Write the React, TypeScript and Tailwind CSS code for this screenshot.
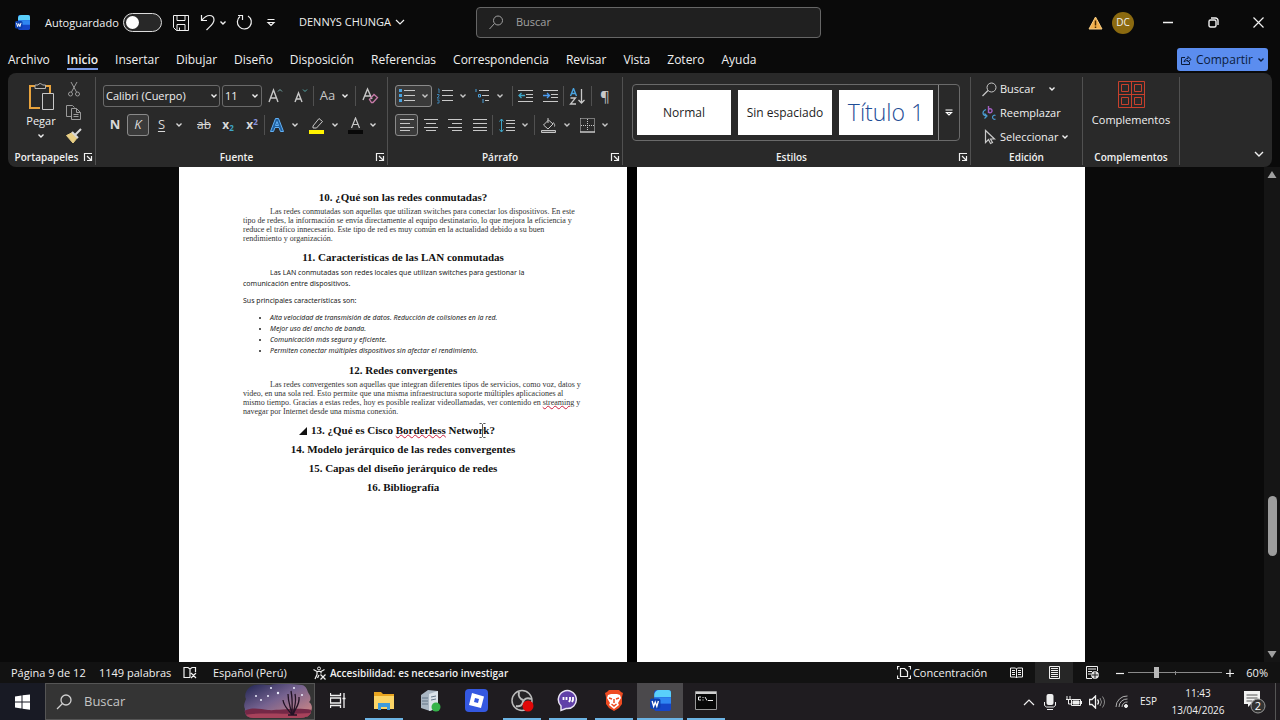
import type { ReactNode } from "react";

const tabs = [
  "Archivo",
  "Inicio",
  "Insertar",
  "Dibujar",
  "Diseño",
  "Disposición",
  "Referencias",
  "Correspondencia",
  "Revisar",
  "Vista",
  "Zotero",
  "Ayuda",
];

type IconProps = { w?: number; h?: number; className?: string; children: ReactNode };

function Icon({ w = 18, h = 18, className = "", children }: IconProps) {
  return (
    <svg
      width={w}
      height={h}
      viewBox={`0 0 ${w} ${h}`}
      fill="none"
      stroke="currentColor"
      aria-hidden="true"
      className={`shrink-0 ${className}`}
    >
      {children}
    </svg>
  );
}

function Chevron({ className = "" }: { className?: string }) {
  return (
    <Icon w={8} h={6} className={className}>
      <path d="M1.5 1.5 4 4l2.500-2.500" strokeWidth="1.400" />
    </Icon>
  );
}

function Launcher({ label }: { label: string }) {
  return (
    <button aria-label={label}>
      <Icon w={10} h={10}>
        <path d="M1.500 9V1.500H9M4 4l4 4M8.500 4v4.500H4" strokeWidth="1.200" />
      </Icon>
    </button>
  );
}

function Separator() {
  return <span className="h-5 w-px shrink-0 bg-[#505050]" />;
}

type ToolProps = { label: string; width: string; active?: boolean; children: ReactNode };

function Tool({ label, width, active, children }: ToolProps) {
  return (
    <button
      aria-label={label}
      className={`flex h-[22px] shrink-0 items-center justify-center gap-1.5 rounded-[3px] border ${
        active ? "border-[#8a8a8a] bg-[#3a3a3a]" : "border-transparent"
      } ${width}`}
    >
      {children}
    </button>
  );
}

type GroupProps = { title: string; width: string; launcher?: boolean; children: ReactNode };

function Group({ title, width, launcher, children }: GroupProps) {
  return (
    <section className={`mt-1 mb-0.5 flex shrink-0 flex-col border-r border-[#505050] ${width}`}>
      <div className="flex-1">{children}</div>
      <div className="flex h-4 items-center px-0.5">
        <h2 className="flex-1 text-center text-[10px] leading-4 font-semibold">{title}</h2>
        {launcher && <Launcher label={`Opciones de ${title}`} />}
      </div>
    </section>
  );
}

function WordLogo({ size }: { size: number }) {
  return (
    <svg width={size} height={size} viewBox="0 0 20 20" aria-hidden="true">
      <rect x="4" y="0" width="16" height="20" rx="2.500" fill="#1546c8" />
      <path d="M4 7h16V2.500A2.500 2.500 0 0 0 17.500 0h-9A4.500 4.500 0 0 0 4 4.500z" fill="#5ad0fb" />
      <path d="M4 7h16v6H4z" fill="#2f86f2" />
      <rect x="0" y="8" width="10" height="10" rx="2" fill="#0c3fae" />
      <path d="m2 10.500 1.500 5L5 11.500l1.500 4 1.500-5" fill="none" stroke="#fff" strokeWidth="1.300" />
    </svg>
  );
}

function TitleBar() {
  return (
    <header className="flex h-[45px] shrink-0 items-center">
      <div className="flex flex-[461_1_0px] items-center pl-[15px]">
        <WordLogo size={15} />
        <label htmlFor="autosave" className="ml-[15px] w-[78px] text-[11px] leading-4 font-medium">
          Autoguardado
        </label>
        <input
          id="autosave"
          type="checkbox"
          className="h-[19px] w-[39px] appearance-none rounded-full border border-[#dcdcdc] bg-[#282828] p-0.5 before:block before:size-[13px] before:rounded-full before:bg-white"
        />
        <button aria-label="Guardar" className="ml-[11px]">
          <Icon w={16} h={16}>
            <path d="M.5.5h15v15h-12l-3-3zM4 .500v5h8v-5M4 15.500v-6h8v6M6.500 15.500v-3" />
          </Icon>
        </button>
        <button aria-label="Deshacer" className="ml-[11px] flex items-center gap-1">
          <Icon w={15} h={17}>
            <path d="M1.500 1v5.500H7M1.500 6.500C4 3.500 6.500 1.500 9.500 1.500c3 0 4.500 2 4.500 4.500 0 4-4.500 6.500-7.500 10" strokeWidth="1.200" />
          </Icon>
          <Chevron />
        </button>
        <button aria-label="Rehacer" className="ml-[9px]">
          <Icon w={17} h={17}>
            <path d="M2 1.500h4.500V6M4 2.500a7 7 0 1 0 8-.500" strokeWidth="1.200" />
          </Icon>
        </button>
        <button aria-label="Personalizar barra" className="ml-[13px]">
          <Icon w={10} h={9}>
            <path d="M1.500 1.500h7M2 4.500h6L5 7.500z" strokeWidth="1.200" />
          </Icon>
        </button>
        <button className="ml-[23px] flex items-center gap-1 text-[11px] whitespace-nowrap">
          DENNYS CHUNGA
          <Icon w={10} h={7}>
            <path d="m1 1 4 4 4-4" strokeWidth="1.200" />
          </Icon>
        </button>
      </div>
      <label className="flex h-[31px] w-[345px] items-center gap-3 rounded border border-[#666] bg-[#202020] px-3 text-[#a0a0a0]">
        <Icon w={15} h={15}>
          <circle cx="9" cy="5.500" r="4.500" />
          <path d="M5.500 8.500.5 14" />
        </Icon>
        <input
          aria-label="Buscar en Word"
          placeholder="Buscar"
          className="w-full bg-transparent text-[11px] outline-none placeholder:text-[#a0a0a0]"
        />
      </label>
      <div className="flex flex-[443_1_0px] items-center justify-end pr-4">
        <button aria-label="Advertencia" className="mr-[9px]">
          <Icon w={15} h={14}>
            <path d="M7.500 1 14 13H1z" fill="#f3b04c" stroke="#f7cd85" />
            <path d="M7.500 4.500v5M7.500 10.500v1.500" stroke="#4a2a00" strokeWidth="1.500" />
          </Icon>
        </button>
        <button className="size-[22px] rounded-full bg-[#8b6a10] text-[10px]">DC</button>
        <button aria-label="Minimizar" className="ml-[29px]">
          <Icon w={10} h={10}>
            <path d="M0 4.500h10" strokeWidth="1.500" />
          </Icon>
        </button>
        <button aria-label="Restaurar" className="ml-[35px]">
          <Icon w={11} h={11}>
            <rect x="1" y="3" width="7" height="7" rx="1.500" strokeWidth="1.400" />
            <path d="M3 1h4.500A2.500 2.500 0 0 1 10 3.500V8" strokeWidth="1.400" />
          </Icon>
        </button>
        <button aria-label="Cerrar" className="ml-[34px]">
          <Icon w={11} h={11}>
            <path d="m.5.5 10 10M10.500.5l-10 10" strokeWidth="1.200" />
          </Icon>
        </button>
      </div>
    </header>
  );
}

function TabBar() {
  return (
    <nav className="flex h-7 shrink-0 items-start justify-between pr-3 pl-2">
      <div className="flex gap-[17px] pt-1.5">
        {tabs.map((tab) => (
          <a
            key={tab}
            href="#inicio"
            className={`border-b-2 text-xs leading-[17px] ${
              tab === "Inicio" ? "border-[#7b9be6] font-semibold" : "border-transparent"
            }`}
          >
            {tab}
          </a>
        ))}
      </div>
      <button className="mt-[3px] flex h-[23px] w-[91px] items-center justify-center gap-1 rounded-[3px] bg-[#5b8def] text-xs text-[#0b1c3c]">
        <Icon w={12} h={12}>
          <path d="M5 3.500H1.500v7h8V8M4 8c.5-2.500 2-3.500 4-3.500V2.500L11 5.500 8 8V6.500C6 6.500 5 7 4 8z" />
        </Icon>
        Compartir
        <Chevron />
      </button>
    </nav>
  );
}

function ClipboardGroup() {
  return (
    <Group title="Portapapeles" width="w-[88px]" launcher>
      <div className="flex gap-2 pt-1 pl-[17px]">
        <button className="flex w-8 flex-col items-center text-[11px] leading-4">
          <Icon w={28} h={32}>
            <path d="M8 5H3v22h10M18 5h5v8" stroke="#e8a33d" strokeWidth="2" />
            <path d="M8 7.500V4h3a2.500 2.500 0 0 1 4.500 0h3v3.500z" stroke="#b5b5b5" />
            <path d="M15.500 12.500h11v16h-11z" fill="#2b2b2b" stroke="#c8c8c8" />
          </Icon>
          Pegar
          <Chevron className="mt-1" />
        </button>
        <div className="flex flex-col gap-1.5 text-[#9a9a9a]">
          <button aria-label="Cortar">
            <Icon h={17}>
              <path d="m6 1 5.500 10M12 1 6.500 11" />
              <circle cx="5.500" cy="13" r="2" />
              <circle cx="12.500" cy="13" r="2" />
            </Icon>
          </button>
          <button aria-label="Copiar">
            <Icon h={17}>
              <path d="M6.500 12.500h-5v-11h6l2 2M6.500 4.500h5l4 4v7h-9zM11.500 4.500v4h4M8.500 10.500h5M8.500 12.500h5" />
            </Icon>
          </button>
          <button aria-label="Copiar formato">
            <Icon h={17}>
              <path d="m1.500 8.500 6-3 5 5-4.500 5.500z" fill="#e9cf85" stroke="#e9cf85" />
              <path d="m7 5 6 6M10 8l6-6" stroke="#d8d8d8" strokeWidth="2" />
            </Icon>
          </button>
        </div>
      </div>
    </Group>
  );
}

function FontGroup() {
  return (
    <Group title="Fuente" width="w-[292px]" launcher>
      <div className="flex items-center pt-2 pl-[7px]">
        <div className="flex h-[22px] w-[117px] items-center rounded-[3px] border border-[#6a6a6a] pr-px pl-0.5">
          <select aria-label="Fuente" className="w-full appearance-none bg-transparent text-[11px] outline-none">
            <option>Calibri (Cuerpo)</option>
          </select>
          <Chevron />
        </div>
        <div className="ml-0.5 flex h-[22px] w-10 items-center rounded-[3px] border border-[#6a6a6a] pr-0.5 pl-0.5">
          <select aria-label="Tamaño de fuente" className="w-full appearance-none bg-transparent text-[11px] outline-none">
            <option>11</option>
          </select>
          <Chevron />
        </div>
        <Tool label="Aumentar tamaño" width="w-[26px]">
          <Icon className="text-[#c8c8c8]">
            <path d="m3 15 4.500-12L12 15M4.500 11h6" strokeWidth="1.400" />
            <path d="m12 4.500 2-2 2 2" stroke="#7aa" />
          </Icon>
        </Tool>
        <Tool label="Disminuir tamaño" width="w-[25px]">
          <Icon className="text-[#c8c8c8]">
            <path d="m3 15 3.500-9L10 15M4.500 12h4" strokeWidth="1.400" />
            <path d="m11 2.500 2 2 2-2" stroke="#5aa" />
          </Icon>
        </Tool>
        <Separator />
        <Tool label="Cambiar mayúsculas" width="w-[41px]">
          <span className="text-[13px] text-[#c8c8c8]">Aa</span>
          <Chevron />
        </Tool>
        <Separator />
        <Tool label="Borrar formato" width="w-7">
          <Icon className="text-[#c8c8c8]">
            <path d="M2 13 6.500 2 11 12M3.500 9h6" strokeWidth="1.400" />
            <path d="m8.500 12.500 4.500-5 3.500 3-4.500 5h-1.500z" stroke="#c77aa8" strokeWidth="1.300" />
          </Icon>
        </Tool>
      </div>
      <div className="flex items-center pt-[7px] pl-[7px] text-[13px] text-[#d8d8d8]">
        <Tool label="Negrita" width="w-6">
          <b>N</b>
        </Tool>
        <Tool label="Cursiva" width="w-[22px]" active>
          <i>K</i>
        </Tool>
        <Tool label="Subrayado" width="w-[43px]">
          <span className="mr-1 underline underline-offset-2">S</span>
          <Chevron />
        </Tool>
        <Tool label="Tachado" width="w-6">
          <s className="text-xs">ab</s>
        </Tool>
        <Tool label="Subíndice" width="w-6">
          <span className="text-xs font-bold">
            x<sub className="text-[8px] text-[#3ea6c8]">2</sub>
          </span>
        </Tool>
        <Tool label="Superíndice" width="w-6">
          <span className="text-xs font-bold">
            x<sup className="text-[8px] text-[#8f97e0]">2</sup>
          </span>
        </Tool>
        <Separator />
        <Tool label="Efectos de texto" width="w-[38px]">
          <Icon w={16} h={16}>
            <path d="M1.500 14.500 6.500 1.500h3l5 13h-3l-1.500-4H6l-1.500 4zM6.500 8.500 8 4.500l1.500 4z" stroke="#62b1f5" fill="#1f5f9f" />
          </Icon>
          <Chevron />
        </Tool>
        <Tool label="Color de resaltado" width="w-[41px]">
          <Icon w={17} h={17}>
            <path d="m5 9 6-7.500 3.500 3L8.500 11H5z" stroke="#c8c8c8" />
            <path d="M1 13h15v4H1z" fill="#fff200" stroke="none" />
          </Icon>
          <Chevron />
        </Tool>
        <Tool label="Color de fuente" width="w-9">
          <Icon w={15} h={17}>
            <path d="M3.500 11 7.500 1l4 10M5 7.500h5" stroke="#c8c8c8" strokeWidth="1.200" />
            <path d="M0 13h15v4H0z" fill="#080808" stroke="none" />
          </Icon>
          <Chevron />
        </Tool>
      </div>
    </Group>
  );
}

function ParagraphGroup() {
  return (
    <Group title="Párrafo" width="w-[235px]" launcher>
      <div className="flex items-center pt-2 pl-[7px] text-[#c8c8c8]">
        <Tool label="Viñetas" width="w-[37px]" active>
          <Icon w={16} h={16}>
            <path d="M5 2.500h11M5 7.500h11M5 12.500h11" />
            <path d="M0 2.500h3M0 7.500h3M0 12.500h3" stroke="#4aa3df" strokeWidth="3" />
          </Icon>
          <Chevron />
        </Tool>
        <Tool label="Numeración" width="w-[39px]">
          <Icon w={16} h={16}>
            <path d="M5 2.500h11M5 7.500h11M5 12.500h11" />
            <path d="M1 1h1v4M0 6.500h2V8L0 10h2.500M0 12h2v3H0" stroke="#3d83b3" />
          </Icon>
          <Chevron />
        </Tool>
        <Tool label="Lista multinivel" width="w-9">
          <Icon w={15} h={16}>
            <path d="M4 2.500h10M7 7.500h7M10 12.500h4" />
            <path d="M1 1v3M3.500 6.500h2V9h-2zM8 11v4" stroke="#4aa3df" />
          </Icon>
          <Chevron />
        </Tool>
        <span className="w-[5px]" />
        <Separator />
        <Tool label="Disminuir sangría" width="w-[25px]">
          <Icon w={15} h={14}>
            <path d="M0 1.500h15M8 5.500h7M8 8.500h7M0 12.500h15" />
            <path d="M7 6.500H1M3.500 4 1 6.500 3.500 9" stroke="#3ea6c8" strokeWidth="1.300" />
          </Icon>
        </Tool>
        <Tool label="Aumentar sangría" width="w-[25px]">
          <Icon w={15} h={14}>
            <path d="M0 1.500h15M8 5.500h7M8 8.500h7M0 12.500h15" />
            <path d="M0 6.500h6M4 4l2.500 2.500L4 9" stroke="#4a9bf0" strokeWidth="1.300" />
          </Icon>
        </Tool>
        <Separator />
        <Tool label="Ordenar" width="w-[27px]">
          <Icon w={17} h={17}>
            <path d="M1.500 8 4.500.500 7.500 8M2.500 5.500h4" stroke="#4aa3df" strokeWidth="1.400" />
            <path d="M1.500 10h5l-5 6h5.500M12.500 1v14M9.500 12l3 3 3-3" strokeWidth="1.300" />
          </Icon>
        </Tool>
        <Separator />
        <Tool label="Mostrar todo" width="w-[26px]">
          <span className="text-[15px]">¶</span>
        </Tool>
      </div>
      <div className="flex items-center pt-[7px] pl-[7px] text-[#c8c8c8]">
        <Tool label="Alinear a la izquierda" width="w-[23px]" active>
          <Icon w={14} h={14}>
            <path d="M0 1.500h14M0 5.500h10M0 9.500h14M0 12.500h10" />
          </Icon>
        </Tool>
        <Tool label="Centrar" width="w-[25px]">
          <Icon w={14} h={14}>
            <path d="M0 1.500h14M2 5.500h10M0 9.500h14M2 12.500h10" />
          </Icon>
        </Tool>
        <Tool label="Alinear a la derecha" width="w-6">
          <Icon w={14} h={14}>
            <path d="M0 1.500h14M4 5.500h10M0 9.500h14M4 12.500h10" />
          </Icon>
        </Tool>
        <Tool label="Justificar" width="w-[25px]">
          <Icon w={14} h={14}>
            <path d="M0 1.500h14M0 5.500h14M0 9.500h14M0 12.500h14" />
          </Icon>
        </Tool>
        <Separator />
        <Tool label="Interlineado" width="w-[41px]">
          <Icon w={16} h={15}>
            <path d="M7 2.500h9M7 5.500h9M7 9.500h9M7 12.500h9" />
            <path d="M2.500 1v13M.500 3.500l2-2.500 2 2.500M.500 11.500l2 2.500 2-2.500" stroke="#3ea6c8" />
          </Icon>
          <Chevron />
        </Tool>
        <Separator />
        <Tool label="Sombreado" width="w-[41px]">
          <Icon w={17} h={17}>
            <path d="m3.500 8 5-5 4.500 4-5 5zM8 1v5M13 5.500c1.500 1 2 2.500 1.500 4" />
            <path d="M1.500 13.500h14v2h-14z" fill="#555" />
          </Icon>
          <Chevron />
        </Tool>
        <Tool label="Bordes" width="w-[37px]">
          <Icon w={15} h={15}>
            <path d="M.5.5h14v13M.5.5v13M7.500 1v12M1 7.500h13" strokeDasharray="1 1" />
            <path d="M0 14h15" strokeWidth="1.500" />
          </Icon>
          <Chevron />
        </Tool>
      </div>
    </Group>
  );
}

function StylesGroup() {
  return (
    <Group title="Estilos" width="w-[348px]" launcher>
      <div className="mt-[7px] ml-[9px] flex h-[57px] w-[328px] rounded-[4px] border border-[#6a6a6a] text-xs text-[#1d1d1d]">
        <div className="flex flex-1 items-center gap-[7px] pl-1">
          <button className="h-[45px] w-[94px] bg-white">Normal</button>
          <button className="h-[45px] w-[94px] bg-white">Sin espaciado</button>
          <button className="h-[45px] w-[94px] bg-white text-[23px] font-light text-[#1f4e96]">Título 1</button>
        </div>
        <button aria-label="Más estilos" className="flex w-[21px] items-center justify-center border-l border-[#8a8a8a] text-white">
          <Icon w={8} h={8}>
            <path d="M.5 1h7M1.500 3.500h5L4 6z" strokeWidth="1.200" />
          </Icon>
        </button>
      </div>
    </Group>
  );
}

function EditingGroup() {
  return (
    <Group title="Edición" width="w-[112px]">
      <div className="flex flex-col pl-[11px] text-[11px] leading-6 font-medium">
        <button className="flex h-6 items-center gap-[3px]">
          <Icon w={15} h={15} className="text-[#c8c8c8]">
            <circle cx="9.500" cy="5.500" r="4.500" />
            <path d="m6 8.500-5.500 5.500" strokeWidth="1.200" />
          </Icon>
          Buscar
          <Chevron className="ml-2.5" />
        </button>
        <button className="flex h-6 items-center gap-[3px]">
          <Icon w={15} h={16}>
            <path d="M6.500 1v7M6.500 4.500a2 2 0 1 1 0 2.500" stroke="#a25fc0" strokeWidth="1.400" />
            <path d="M4 4.500C0 6 0 10 4 11M2.500 8.500 5 11l-2.500 2.500M13.500 10.500a2 2 0 1 0 0 3.500" stroke="#4a9bd0" strokeWidth="1.200" />
          </Icon>
          Reemplazar
        </button>
        <button className="flex h-6 items-center gap-[3px]">
          <Icon w={15} h={16} className="text-[#c8c8c8]">
            <path d="M3.500 1.500v12l3-3 2 4 2-1-2-3.500h4z" strokeWidth="1.200" />
          </Icon>
          Seleccionar
          <Chevron />
        </button>
      </div>
    </Group>
  );
}

function Ribbon() {
  return (
    <div className="z-10 mx-2 flex h-[94px] shrink-0 rounded-lg bg-[#292929]">
      <ClipboardGroup />
      <FontGroup />
      <ParagraphGroup />
      <StylesGroup />
      <EditingGroup />
      <Group title="Complementos" width="w-[97px]">
        <button className="flex w-full flex-col items-center gap-1 pt-1 text-[11px] leading-4">
          <Icon w={27} h={27} className="text-[#c8402c]">
            <path d="M.5.5h26v26H.5zM13.500 0v27M0 13.500h27" />
            <path d="M3.500 3.500h7v7h-7zM16.500 3.500h7v7h-7zM3.500 16.500h7v7h-7zM16.500 16.500h7v7h-7z" />
          </Icon>
          Complementos
        </button>
      </Group>
      <div className="flex flex-1 items-end justify-end pr-2 pb-[9px]">
        <button aria-label="Contraer cinta">
          <Icon w={10} h={7}>
            <path d="m1 1 4 4 4-4" strokeWidth="1.400" />
          </Icon>
        </button>
      </div>
    </div>
  );
}

function Heading({ children }: { children: ReactNode }) {
  return <h3 className="text-center font-['Liberation_Serif',serif] text-[11px] leading-[19px] font-bold">{children}</h3>;
}

function SerifText({ children }: { children: ReactNode }) {
  return (
    <p className="indent-[27px] font-['Liberation_Serif',serif] text-[8px] leading-[9px] whitespace-nowrap text-[#333]">
      {children}
    </p>
  );
}

function Misspelled({ children }: { children: ReactNode }) {
  return (
    <span className="underline decoration-[#d0213f] decoration-wavy decoration-1 underline-offset-[0px]">{children}</span>
  );
}

function Document() {
  return (
    <main className="flex min-h-0 flex-1 bg-[#0a0a0a]">
      <div className="flex flex-1 justify-center overflow-hidden">
        <article className="w-[448px] bg-white px-16 pt-[21px] text-[#111]">
          <Heading>10. ¿Qué son las redes conmutadas?</Heading>
          <SerifText>
            Las redes conmutadas son aquellas que utilizan switches para conectar los dispositivos. En este
            <br />
            tipo de redes, la información se envía directamente al equipo destinatario, lo que mejora la eficiencia y
            <br />
            reduce el tráfico innecesario. Este tipo de red es muy común en la actualidad debido a su buen
            <br />
            rendimiento y organización.
          </SerifText>
          <div className="pt-[5px]">
            <Heading>11. Características de las LAN conmutadas</Heading>
          </div>
          <div className="font-['Noto_Sans',sans-serif] text-[7px] leading-[11px] whitespace-nowrap text-[#222]">
            <p className="indent-[27px]">
              Las LAN conmutadas son redes locales que utilizan switches para gestionar la
              <br />
              comunicación entre dispositivos.
            </p>
            <p className="mt-1.5">Sus principales características son:</p>
            <ul className="mt-1.5 list-disc pl-[27px] italic">
              <li>Alta velocidad de transmisión de datos. Reducción de colisiones en la red.</li>
              <li>Mejor uso del ancho de banda.</li>
              <li>Comunicación más segura y eficiente.</li>
              <li>Permiten conectar múltiples dispositivos sin afectar el rendimiento.</li>
            </ul>
          </div>
          <div className="pt-[5px]">
            <Heading>12. Redes convergentes</Heading>
          </div>
          <SerifText>
            Las redes convergentes son aquellas que integran diferentes tipos de servicios, como voz, datos y
            <br />
            video, en una sola red. Esto permite que una misma infraestructura soporte múltiples aplicaciones al
            <br />
            mismo tiempo. Gracias a estas redes, hoy es posible realizar videollamadas, ver contenido en{" "}
            <Misspelled>streaming</Misspelled> y
            <br />
            navegar por Internet desde una misma conexión.
          </SerifText>
          <div className="relative pt-[5px]">
            <Heading>
              13. ¿Qué es Cisco <Misspelled>Borderless</Misspelled> Network?
            </Heading>
            <Icon w={8} h={8} className="absolute top-[11px] left-14">
              <path d="M8 0v8H0z" fill="#111" stroke="none" />
            </Icon>
            {/* text cursor */}
            <Icon w={7} h={15} className="absolute top-[7px] left-[236px] text-[#555]">
              <path d="M.5.5h2l1 1 1-1h2M3.500 1.500v12M.5 14.500h2l1-1 1 1h2" />
            </Icon>
          </div>
          <Heading>14. Modelo jerárquico de las redes convergentes</Heading>
          <Heading>15. Capas del diseño jerárquico de redes</Heading>
          <Heading>16. Bibliografía</Heading>
        </article>
        <div className="w-2.5 bg-black" />
        <article className="w-[448px] bg-white" />
      </div>
      <div className="flex w-4 flex-col items-center bg-[#151515] py-1 text-[#a0a0a0]">
        <button aria-label="Subir">
          <Icon w={10} h={7}>
            <path d="m5 0 4.500 7h-9z" fill="currentColor" stroke="none" />
          </Icon>
        </button>
        <div className="flex-[323_1_0px]" />
        <div className="h-[60px] w-[9px] rounded-full bg-[#9d9d9d]" />
        <div className="flex-[96_1_0px]" />
        <button aria-label="Bajar">
          <Icon w={10} h={7}>
            <path d="M5 7 .5 0h9z" fill="currentColor" stroke="none" />
          </Icon>
        </button>
      </div>
    </main>
  );
}

function StatusBar() {
  return (
    <footer className="flex h-[21px] shrink-0 items-center bg-[#121212] pr-3 pl-[11px] text-[11px] leading-4 whitespace-nowrap">
      <span className="w-22">Página 9 de 12</span>
      <span className="w-21">1149 palabras</span>
      <button aria-label="Revisión ortográfica" className="w-[30px]">
        <Icon w={14} h={13}>
          <path d="M7 11.500H1v-10h4l2 1.500v8.500M7 3l2-1.500h3.500V6M8 7l5 5M13 7l-5 5" strokeWidth="1.200" />
        </Icon>
      </button>
      <span className="w-[100px]">Español (Perú)</span>
      <button className="flex items-center gap-1 text-[10px] font-semibold">
        <Icon w={13} h={14}>
          <circle cx="6" cy="2.500" r="1.500" />
          <path d="M.5 3.500 4 5.500v3l-2 4.500M11.500 3.500 8 5.500v2M4 5.500h4M4.500 12l1.500-3M7.500 8.500l5 5M12.500 8.500l-5 5" strokeWidth="1.200" />
        </Icon>
        Accesibilidad: es necesario investigar
      </button>
      <button className="ml-auto flex items-center gap-0.5">
        <Icon w={14} h={13}>
          <path d="M3.500 2.500h4l3 3v5h-7zM.5 3.500v-3h2M.500 9.500v3h2M11.500.5h2v3M11.500 12.500h2v-3" strokeWidth="1.200" />
        </Icon>
        Concentración
      </button>
      <button aria-label="Modo lectura" className="ml-[23px]">
        <Icon w={13} h={12}>
          <path d="M6.500 2 5.500 1H.5v9h5l1 1 1-1h5V1h-5zV11M2 3.500h3M2 5.500h3M2 7.500h3M8 3.500h3M8 5.500h3M8 7.500h3" />
        </Icon>
      </button>
      <button aria-label="Diseño de impresión" className="ml-3 flex h-[21px] w-[38px] items-center justify-center bg-[#262626]">
        <Icon w={11} h={13}>
          <path d="M.5.5h10v12H.5zM2 2.500h7M2 4.500h7M2 6.500h7M2 8.500h7M2 10.500h7" />
        </Icon>
      </button>
      <button aria-label="Diseño web" className="ml-[13px]">
        <Icon w={13} h={13}>
          <path d="M6 12.500H.500V.5h11V5M2 3h8M2 5.500h4M2 8h3" />
          <circle cx="9" cy="9" r="3.500" fill="#ddd" />
          <path d="M5.500 9h7M9 5.500v7" stroke="#222" />
        </Icon>
      </button>
      <button aria-label="Alejar" className="ml-[17px]">
        <Icon w={8} h={8}>
          <path d="M0 4.500h8" strokeWidth="1.200" />
        </Icon>
      </button>
      <div className="relative ml-1 flex h-3 w-[94px] items-center">
        <input
          type="range"
          aria-label="Zoom"
          min={0}
          max={100}
          defaultValue={29}
          className="h-px w-full appearance-none bg-[#8a8a8a] [&::-webkit-slider-thumb]:h-[11px] [&::-webkit-slider-thumb]:w-[5px] [&::-webkit-slider-thumb]:appearance-none [&::-webkit-slider-thumb]:bg-[#b8b8b8]"
        />
        <span className="absolute top-1 left-1/2 h-1 w-px bg-[#8a8a8a]" />
      </div>
      <button aria-label="Acercar" className="ml-1">
        <Icon w={8} h={8}>
          <path d="M0 4.500h8M4 .5v8" strokeWidth="1.200" />
        </Icon>
      </button>
      <span className="ml-3">60%</span>
    </footer>
  );
}

type AppButtonProps = { name: string; running?: boolean; active?: boolean; children: ReactNode };

function AppButton({ name, running, active, children }: AppButtonProps) {
  return (
    <button
      aria-label={name}
      className={`flex h-full w-[46px] shrink-0 flex-col items-center ${active ? "bg-[#4b494c]" : ""}`}
    >
      <span className="flex flex-1 items-center">{children}</span>
      <span className={`h-0.5 ${active ? "w-full" : "w-[38px]"} ${running ? "bg-[#6cb4e4]" : ""}`} />
    </button>
  );
}

function Landscape() {
  return (
    <svg width="68" height="35" viewBox="0 0 68 35" aria-hidden="true">
      <defs>
        <linearGradient id="sky" x1="0" y1="0" x2="1" y2="1">
          <stop offset="0" stopColor="#1d2350" />
          <stop offset=".450" stopColor="#75628f" />
          <stop offset="1" stopColor="#dd8d84" />
        </linearGradient>
        <clipPath id="cloud">
          <path d="M6 3C12-1 20 1 26 1c10-2 24-1 32 0 5 1 5 6 7 9s2 6 0 8c4 3 3 7 2 9 0 5-6 7-12 7H9c-6 0-9-4-8-9-2-4 0-7 1-10-2-4 0-9 4-12z" />
        </clipPath>
      </defs>
      <g clipPath="url(#cloud)">
        <path fill="url(#sky)" d="M0 0h68v35H0z" />
        <path d="M0 27c8-4 16-2 24-1s26-3 44 0v9H0z" fill="#742846" />
        <path d="M0 31c16-3 40 0 68-2v6H0z" fill="#a7425b" />
        <g fill="#eef0ff">
          <circle cx="12" cy="12" r="1" />
          <circle cx="17" cy="16" r="1" />
          <circle cx="24" cy="12" r="1" />
          <circle cx="34" cy="9" r="1.200" />
          <circle cx="27" cy="4" r="1" />
          <circle cx="50" cy="4" r="1" />
          <circle cx="58" cy="11" r="1" />
        </g>
        <path
          d="M48 31c-4-6-8-8-9-15M48 31c-1-7-4-12-4-21M48 31c0-8 1-14-1-24M49 31c1-8 4-12 2-21M49 31c2-7 7-10 6-18M44 31h9"
          fill="none"
          stroke="#221325"
          strokeWidth="1.300"
        />
      </g>
    </svg>
  );
}

function Taskbar() {
  return (
    <footer className="flex h-[37px] shrink-0 items-center bg-[#1f1c20]">
      <button aria-label="Inicio" className="flex h-full w-[45px] items-center justify-center bg-[#181a24]">
        <Icon w={15} h={16}>
          <path d="m0 2.500 6.500-1v6H0zM7.500 1.300 15 .500v7H7.500zM0 8.500h6.500v6L0 13.500zM7.500 8.500H15v7.300l-7.500-1z" fill="#fff" stroke="none" />
        </Icon>
      </button>
      <label className="flex h-full w-[270px] items-center gap-3 border border-[#555] bg-[#343434] pr-0.5 pl-2.5 text-[#d0d0d0]">
        <Icon w={16} h={16}>
          <circle cx="10" cy="6" r="5" strokeWidth="1.300" />
          <path d="M6.500 9.500 1 15" strokeWidth="1.300" />
        </Icon>
        <input
          aria-label="Buscar en Windows"
          placeholder="Buscar"
          className="w-full min-w-0 bg-transparent text-[13px] outline-none placeholder:text-[#c4c4c4]"
        />
        <span className="shrink-0">
          <Landscape />
        </span>
      </label>
      <AppButton name="Vista de tareas">
        <Icon w={16} h={15}>
          <path d="M.5 0v2.500h10V0M.5 5h10v5H.5zM.5 15v-2.500h10V15M14 0v15M12.500 5.500h3" strokeWidth="1.300" />
        </Icon>
      </AppButton>
      <AppButton name="Explorador" running>
        <Icon w={22} h={20}>
          <g stroke="none">
            <path d="M1 1h7l2 2h11v5H1z" fill="#e8a520" />
            <path d="M1 5h20v13H1z" fill="#fbd566" />
            <path d="M5 19v-7h12v7h-3v-3H8v3z" fill="#3d9bdc" />
          </g>
        </Icon>
      </AppButton>
      <AppButton name="Servidor">
        <Icon w={21} h={22}>
          <g stroke="none">
            <path d="M1 5 8 0l10 1v17l-8 3-9-3z" fill="#a9b6c3" />
            <path d="m9 4 9-3v17l-9 3z" fill="#dbe3ea" />
            <circle cx="16" cy="17" r="4.500" fill="#35b34a" />
          </g>
          <path d="M2 8h6M2 11h6M2 14h6M11 7l5-1M11 10l5-1" stroke="#657789" />
        </Icon>
      </AppButton>
      <AppButton name="Roblox Studio">
        <Icon w={23} h={23}>
          <rect width="23" height="23" rx="4" fill="#3458e0" stroke="none" />
          <path d="m7 4 12 3.500L16 19 4 16z" fill="#fff" stroke="none" />
          <path d="m10 9 4 1-1 4-4-1z" fill="#3458e0" stroke="none" />
        </Icon>
      </AppButton>
      <AppButton name="OBS" running>
        <Icon w={24} h={24}>
          <circle cx="12" cy="11.500" r="10" fill="#252326" stroke="#bbb" strokeWidth="1.500" />
          <path d="M9 3c-1 4 1 7 4 8M21 10c-4-2-7 0-8 3M6 17c4 1 7-1 7-5" stroke="#bbb" strokeWidth="2" />
          <circle cx="18" cy="17" r="5.500" fill="#e00808" stroke="none" />
        </Icon>
      </AppButton>
      <AppButton name="Chat" running>
        <Icon w={22} h={23}>
          <path d="M4 21.500V17a9 9 0 1 1 5 2.500z" fill="#6040a8" stroke="#e8e2f2" strokeWidth="1.500" />
          <path d="M6.500 8v3M9.500 8v3M13 8v3l-1 2M16 8v3l-1 2" stroke="#fff" strokeWidth="1.800" />
        </Icon>
      </AppButton>
      <AppButton name="Brave" running>
        <Icon w={20} h={23}>
          <path d="m5 1-2 2-2 1 1 4v7l3 4 5 3 5-3 3-4V8l1-4-2-1-2-2z" fill="#ee4b22" stroke="none" />
          <path d="m4 6 3-1h6l3 1 1 3-3 5 1 2-5 4-5-4 1-2-3-5z" fill="#fff" stroke="none" />
          <path d="m5 9 3 1M15 9l-3 1M10 10v4M7.500 15l2.500 2 2.500-2" stroke="#ee4b22" strokeWidth="1.500" />
        </Icon>
      </AppButton>
      <AppButton name="Word" running active>
        <WordLogo size={21} />
      </AppButton>
      <AppButton name="Símbolo del sistema" running>
        <Icon w={22} h={19}>
          <path d="M.5.5h21v18H.5z" fill="#080808" stroke="#999" />
          <path d="M1 2h20" stroke="#d0d0d0" strokeWidth="2" />
          <path d="M6 6H3.500v3H6M8 6v1M8 8.500v1M10 6l2 3.500M13 9.500h5" stroke="#eee" />
        </Icon>
      </AppButton>
      <div className="ml-auto flex h-full items-center pr-1">
        <button aria-label="Iconos ocultos">
          <Icon w={12} h={8}>
            <path d="m1 7 5-5 5 5" strokeWidth="1.200" />
          </Icon>
        </button>
        <Icon w={12} h={16} className="ml-[9px]">
          <rect x="2.500" y="0" width="7" height="11" rx="2" fill="#eee" stroke="none" />
          <path d="M.5 8v3.500l2 1.500h7l2-1.500V8M3 15.500h6" />
        </Icon>
        <Icon w={16} h={12} className="ml-2.5">
          <path d="M5.500 3.500h9v6h-9zM15.500 5v3" />
          <path d="M7 5h6v3H7z" fill="#eee" />
          <path d="M1 0v3M4 0v3M0 3.500h5M2.500 4v4H5" />
        </Icon>
        <Icon w={16} h={14} className="ml-[7px]">
          <path d="M.5 4.500H3L6.500 1v12L3 9.500H.5zM8.500 4.500q2 2.500 0 5" strokeWidth="1.300" />
          <path d="M11 3q3 4 0 8M13.500 1.500q4 5.500 0 11" stroke="#8a8a8a" />
        </Icon>
        <Icon w={13} h={13} className="ml-2.5">
          <path d="M1 12A11 11 0 0 1 12.500 1M4 12a8 8 0 0 1 8.500-8M7 12a5 5 0 0 1 5.500-5" stroke="#b0b0b0" />
          <circle cx="11" cy="11" r="1.500" fill="#eee" />
        </Icon>
        <span className="ml-3 text-[10px]">ESP</span>
        <time className="ml-3 w-[58px] text-center text-[10px] leading-[17px]">
          11:43
          <br />
          13/04/2026
        </time>
        <button aria-label="Notificaciones" className="mr-2 ml-4">
          <Icon w={24} h={24}>
            <path d="M1 1h16v13H8l-3 3v-3H1z" fill="#f2f2f2" stroke="none" />
            <path d="M3.500 5h11M3.500 8h11M3.500 11h6" stroke="#555" />
            <circle cx="15" cy="16" r="7" fill="#333" stroke="#999" />
            <text x="15" y="20" textAnchor="middle" fontSize="11" fill="#fff" stroke="none">
              2
            </text>
          </Icon>
        </button>
        <span className="h-full w-px bg-[#555]" />
      </div>
    </footer>
  );
}

export default function App() {
  return (
    <div className="flex h-screen flex-col overflow-hidden bg-[#0a0a0a] font-['Open_Sans','Noto_Sans',sans-serif] text-[#f0f0f0]">
      <TitleBar />
      <TabBar />
      <Ribbon />
      <Document />
      <StatusBar />
      <Taskbar />
    </div>
  );
}
